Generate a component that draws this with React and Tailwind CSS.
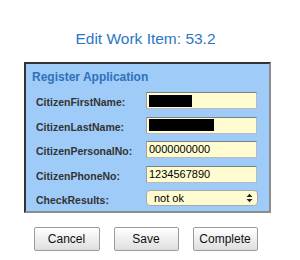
const fields = [
  { label: "CitizenFirstName:", redact: 43 },
  { label: "CitizenLastName:", redact: 65 },
  { label: "CitizenPersonalNo:", value: "0000000000" },
  { label: "CitizenPhoneNo:", value: "1234567890" },
];

const Field = ({ label, value, redact }) => (
  <div className="flex items-center h-[17px]">
    <span className="w-[110px] mt-[3px] text-[10.5px] font-bold text-[#333] leading-[12px]">
      {label}
    </span>
    <div className="w-[111px] h-[17px] flex items-center pl-[2px] bg-[#fffcd2] border border-[#b9b9b9] border-t-[#7f7f7f] border-l-[#a0a0a0] text-[11px] text-black">
      {redact ? (
        <div className="h-[12px] bg-black" style={{ width: redact }} />
      ) : (
        value
      )}
    </div>
  </div>
);

const Btn = ({ label, w }) => (
  <button
    type="button"
    className={`${w} h-[24px] rounded-[2px] border border-[#9c9c9c] bg-gradient-to-b from-white to-[#dedede] text-[12px] text-[#111]`}
  >
    {label}
  </button>
);

export default function App() {
  return (
    <div
      className="w-[300px] h-[260px] bg-white overflow-hidden"
      style={{ fontFamily: '"Liberation Sans", Arial, sans-serif' }}
    >
      <div className="ml-[24px] w-[243px] flex flex-col">
        <h1 className="mt-[30px] text-center text-[15.5px] leading-[18px] text-[#2b77c4]">
          Edit Work Item: 53.2
        </h1>

        <div className="mt-[14px] w-[247px] bg-[#9ecbf8] border-2 border-t-[#333] border-l-[#333] border-r-[#8c8c8c] border-b-[#8c8c8c] pt-[6px] pb-[5px]">
          <p className="pl-[6px] text-[12px] leading-[14px] font-bold text-[#2e72b9]">
            Register Application
          </p>
          <div className="mt-[8px] pl-[10px] flex flex-col gap-[7.5px]">
            {fields.map((f) => (
              <Field key={f.label} {...f} />
            ))}
            <div className="flex items-center h-[16px]">
              <span className="w-[110px] mt-[3px] text-[10.5px] font-bold text-[#333] leading-[12px]">
                CheckResults:
              </span>
              <div className="w-[112px] h-[16px] flex items-center justify-between pl-[7px] pr-[4px] rounded-[4px] bg-[#fffcd2] border border-[#a8a8a8] text-[11px] text-black">
                <span>not ok</span>
                <svg width="7" height="10" viewBox="0 0 7 10">
                  <path d="M0.5 4 L3.5 0.8 L6.5 4 Z" fill="#222" />
                  <path d="M0.5 6 L3.5 9.2 L6.5 6 Z" fill="#222" />
                </svg>
              </div>
            </div>
          </div>
        </div>

        <div className="mt-[14px] flex justify-center gap-[14px]">
          <Btn label="Cancel" w="w-[66px]" />
          <Btn label="Save" w="w-[65px]" />
          <Btn label="Complete" w="w-[65px]" />
        </div>
      </div>
    </div>
  );
}
